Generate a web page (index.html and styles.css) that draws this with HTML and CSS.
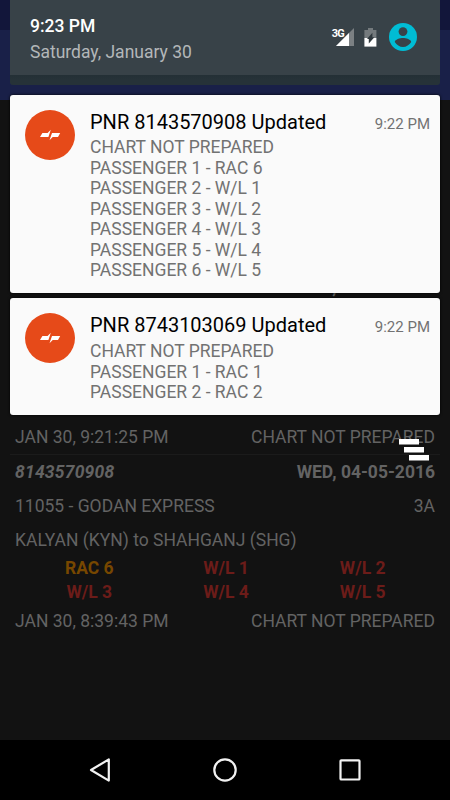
FILE: index.html
```html
<!DOCTYPE html>
<html lang="en">
<head>
    <meta charset="UTF-8">
    <meta name="viewport" content="width=device-width, initial-scale=1.0">
    <title>PNR Status</title>
    <link rel="stylesheet" href="styles.css">
</head>
<body>

<div class="app">
    <div class="status-bar"></div>
    <div class="app-bar"></div>

    <div class="records">
        <div class="record previous">
            <div class="row bold">
                <span></span>
                <span>WED, 04-05-2016</span>
            </div>
            <div class="row updated">
                <span>JAN 30, 9:21:25 PM</span>
                <span>CHART NOT PREPARED</span>
            </div>
        </div>
        <div class="record">
            <div class="row bold">
                <span class="pnr">8143570908</span>
                <span>WED, 04-05-2016</span>
            </div>
            <div class="row train">
                <span>11055 - GODAN EXPRESS</span>
                <span>3A</span>
            </div>
            <div class="row route">
                <span>KALYAN (KYN) to SHAHGANJ (SHG)</span>
            </div>
            <div class="passengers">
                <span class="rac">RAC 6</span>
                <span>W/L 1</span>
                <span>W/L 2</span>
                <span>W/L 3</span>
                <span>W/L 4</span>
                <span>W/L 5</span>
            </div>
            <div class="row updated">
                <span>JAN 30, 8:39:43 PM</span>
                <span>CHART NOT PREPARED</span>
            </div>
        </div>
    </div>

    <div class="nav-bar">
        <svg width="26" height="28" viewBox="0 0 26 28"><path d="M21.8 3.4v21.2L4 14z" fill="none" stroke="#f2f2f2" stroke-width="2.2" stroke-linejoin="round"/></svg>
        <svg width="26" height="28" viewBox="0 0 26 28"><circle cx="13" cy="14" r="10.7" fill="none" stroke="#f2f2f2" stroke-width="2.2"/></svg>
        <svg width="26" height="28" viewBox="0 0 26 28"><rect x="3.5" y="4.3" width="19" height="19.2" rx="0.8" fill="none" stroke="#f2f2f2" stroke-width="2.2"/></svg>
    </div>
</div>

<!-- notification shade over the app -->
<div class="shade">
    <div class="shade-header">
        <div class="shade-top">
            <div>
                <div class="clock">9:23 PM</div>
                <div class="date">Saturday, January 30</div>
            </div>
            <div class="icons">
                <div class="signal">
                    <span class="network">3G</span>
                    <svg width="18" height="18" viewBox="0 0 18 18">
                        <path d="M18 0v18H0z" fill="#7b8083"/>
                        <path d="M13 5v13H0z" fill="#fff"/>
                    </svg>
                </div>
                <svg class="battery" width="13" height="19" viewBox="0 0 13 19">
                    <path d="M4 0h5v2h3.4v8H.4V2H4z" fill="#747a7d"/>
                    <path d="M.4 10h12v8.6H.4z" fill="#fff"/>
                    <path d="M8.4 4.8v4.4h2L4.8 15.6V11H3z" fill="#2f383d"/>
                </svg>
                <svg class="avatar" width="28" height="28" viewBox="0 0 28 28">
                    <circle cx="14" cy="14" r="14" fill="#00bcd4"/>
                    <circle cx="14" cy="8.6" r="4.4" fill="#384248"/>
                    <path d="M5.8 19c0-2.5 5.3-4 8.2-4s8.2 1.5 8.2 4c-1.8 2.9-4.8 5-8.2 5s-6.4-2.1-8.2-5z" fill="#384248"/>
                </svg>
            </div>
        </div>
    </div>

    <div class="notification">
        <svg class="logo" width="50" height="50" viewBox="0 0 50 50">
            <circle cx="25" cy="25" r="25" fill="#e64a19"/>
            <path d="M17.4 23h5.2l3.2-3.2-2.4 7.3H15zM27 23h8.2L33 27.1h-5.3l-3.2 3.2z" fill="#fff"/>
        </svg>
        <div class="message">
            <div class="title-row">
                <h2>PNR 8143570908 Updated</h2>
                <span class="time">9:22 PM</span>
            </div>
            <div class="line">CHART NOT PREPARED</div>
            <div class="line">PASSENGER 1 - RAC 6</div>
            <div class="line">PASSENGER 2 - W/L 1</div>
            <div class="line">PASSENGER 3 - W/L 2</div>
            <div class="line">PASSENGER 4 - W/L 3</div>
            <div class="line">PASSENGER 5 - W/L 4</div>
            <div class="line">PASSENGER 6 - W/L 5</div>
        </div>
    </div>

    <div class="notification short">
        <svg class="logo" width="50" height="50" viewBox="0 0 50 50">
            <circle cx="25" cy="25" r="25" fill="#e64a19"/>
            <path d="M17.4 23h5.2l3.2-3.2-2.4 7.3H15zM27 23h8.2L33 27.1h-5.3l-3.2 3.2z" fill="#fff"/>
        </svg>
        <div class="message">
            <div class="title-row">
                <h2>PNR 8743103069 Updated</h2>
                <span class="time">9:22 PM</span>
            </div>
            <div class="line">CHART NOT PREPARED</div>
            <div class="line">PASSENGER 1 - RAC 1</div>
            <div class="line">PASSENGER 2 - RAC 2</div>
        </div>
    </div>

    <svg class="clear-all" width="30" height="22" viewBox="0 0 30 22">
        <path d="M0 0h20v5.5H0zM5 8h20v5.5H5zM10 16h20v5.5H10z" fill="#fff"/>
    </svg>
</div>

</body>
</html>
```

FILE: styles.css
```css
body {
    font-family: Roboto, Arial, sans-serif;
    font-size: 17.5px;
    background-color: #000;
    margin: 0;
    position: relative;
    width: 450px;
    height: 800px;
    overflow: hidden;
}

.app {
    height: 800px;
    display: flex;
    flex-direction: column;
    background-color: #121212;
    color: #636363;
}

.status-bar {
    height: 30px;
    background-color: #12163a;
}

.app-bar {
    height: 70px;
    background-color: #192048;
}

.records {
    flex: 1;
    padding: 175px 10px 0;
}

.record {
    padding: 0 5px;
}

.previous {
    height: 180px;
    display: flex;
    flex-direction: column;
    justify-content: space-between;
    border-bottom: 1px solid #1b1b1b;
    box-sizing: border-box;
}

.row {
    display: flex;
    justify-content: space-between;
    height: 34px;
    line-height: 34px;
}

.bold {
    font-weight: bold;
}

.previous .bold {
    height: 24px;
    line-height: 24px;
}

.pnr {
    font-style: italic;
    letter-spacing: 0.2px;
}

.route {
    height: 33px;
    line-height: 34px;
}

.passengers {
    display: grid;
    grid-template-columns: repeat(3, 1fr);
    grid-auto-rows: 24px;
    line-height: 24px;
    padding: 0 4px 0 6px;
    text-align: center;
    font-weight: bold;
    color: #6c1c19;
}

.rac {
    color: #774700;
}

.nav-bar {
    height: 60px;
    background-color: #000;
    display: flex;
    justify-content: space-between;
    align-items: center;
    padding: 0 87px;
}

.shade {
    position: absolute;
    top: 0;
    left: 10px;
    width: 430px;
}

.shade-header {
    height: 85px;
    background: linear-gradient(#243036 75px, #263238 80px);
    border-radius: 0 0 3px 3px;
    margin-bottom: 10px;
}

.shade-top {
    height: 75px;
    box-sizing: border-box;
    padding: 13px 23px 0 20px;
    background-color: #384248;
    display: flex;
    justify-content: space-between;
    line-height: 26px;
}

.clock {
    color: #fff;
    font-weight: 500;
}

.date {
    color: #b3b7b9;
}

.icons {
    display: flex;
    align-items: flex-start;
    padding-top: 10px;
}

.signal {
    display: flex;
    padding-top: 5px;
    margin-right: 10px;
}

.network {
    color: #fff;
    font-size: 11px;
    font-weight: bold;
    line-height: 11px;
    letter-spacing: -0.8px;
    margin-right: -8px;
}

.battery {
    margin: 5px 12px 0 0;
}

.notification {
    display: flex;
    height: 198px;
    box-sizing: border-box;
    padding: 15px 10px 0 15px;
    background-color: #fafafa;
    border-radius: 3px;
    margin-bottom: 5px;
    box-shadow: 0 0 3px #000;
}

.short {
    height: 117px;
}

.message {
    flex: 1;
    margin-left: 15px;
    color: #727272;
}

.title-row {
    display: flex;
    justify-content: space-between;
    height: 27.3px;
    line-height: 24px;
}

.short .title-row {
    height: 28px;
}

.title-row h2 {
    margin: 0;
    color: #000;
    font-size: 20px;
    font-weight: normal;
}

.time {
    font-size: 15px;
    line-height: 28px;
}

.line {
    height: 20.5px;
    line-height: 20.5px;
}

.clear-all {
    position: absolute;
    top: 439px;
    left: 389px;
}
```
